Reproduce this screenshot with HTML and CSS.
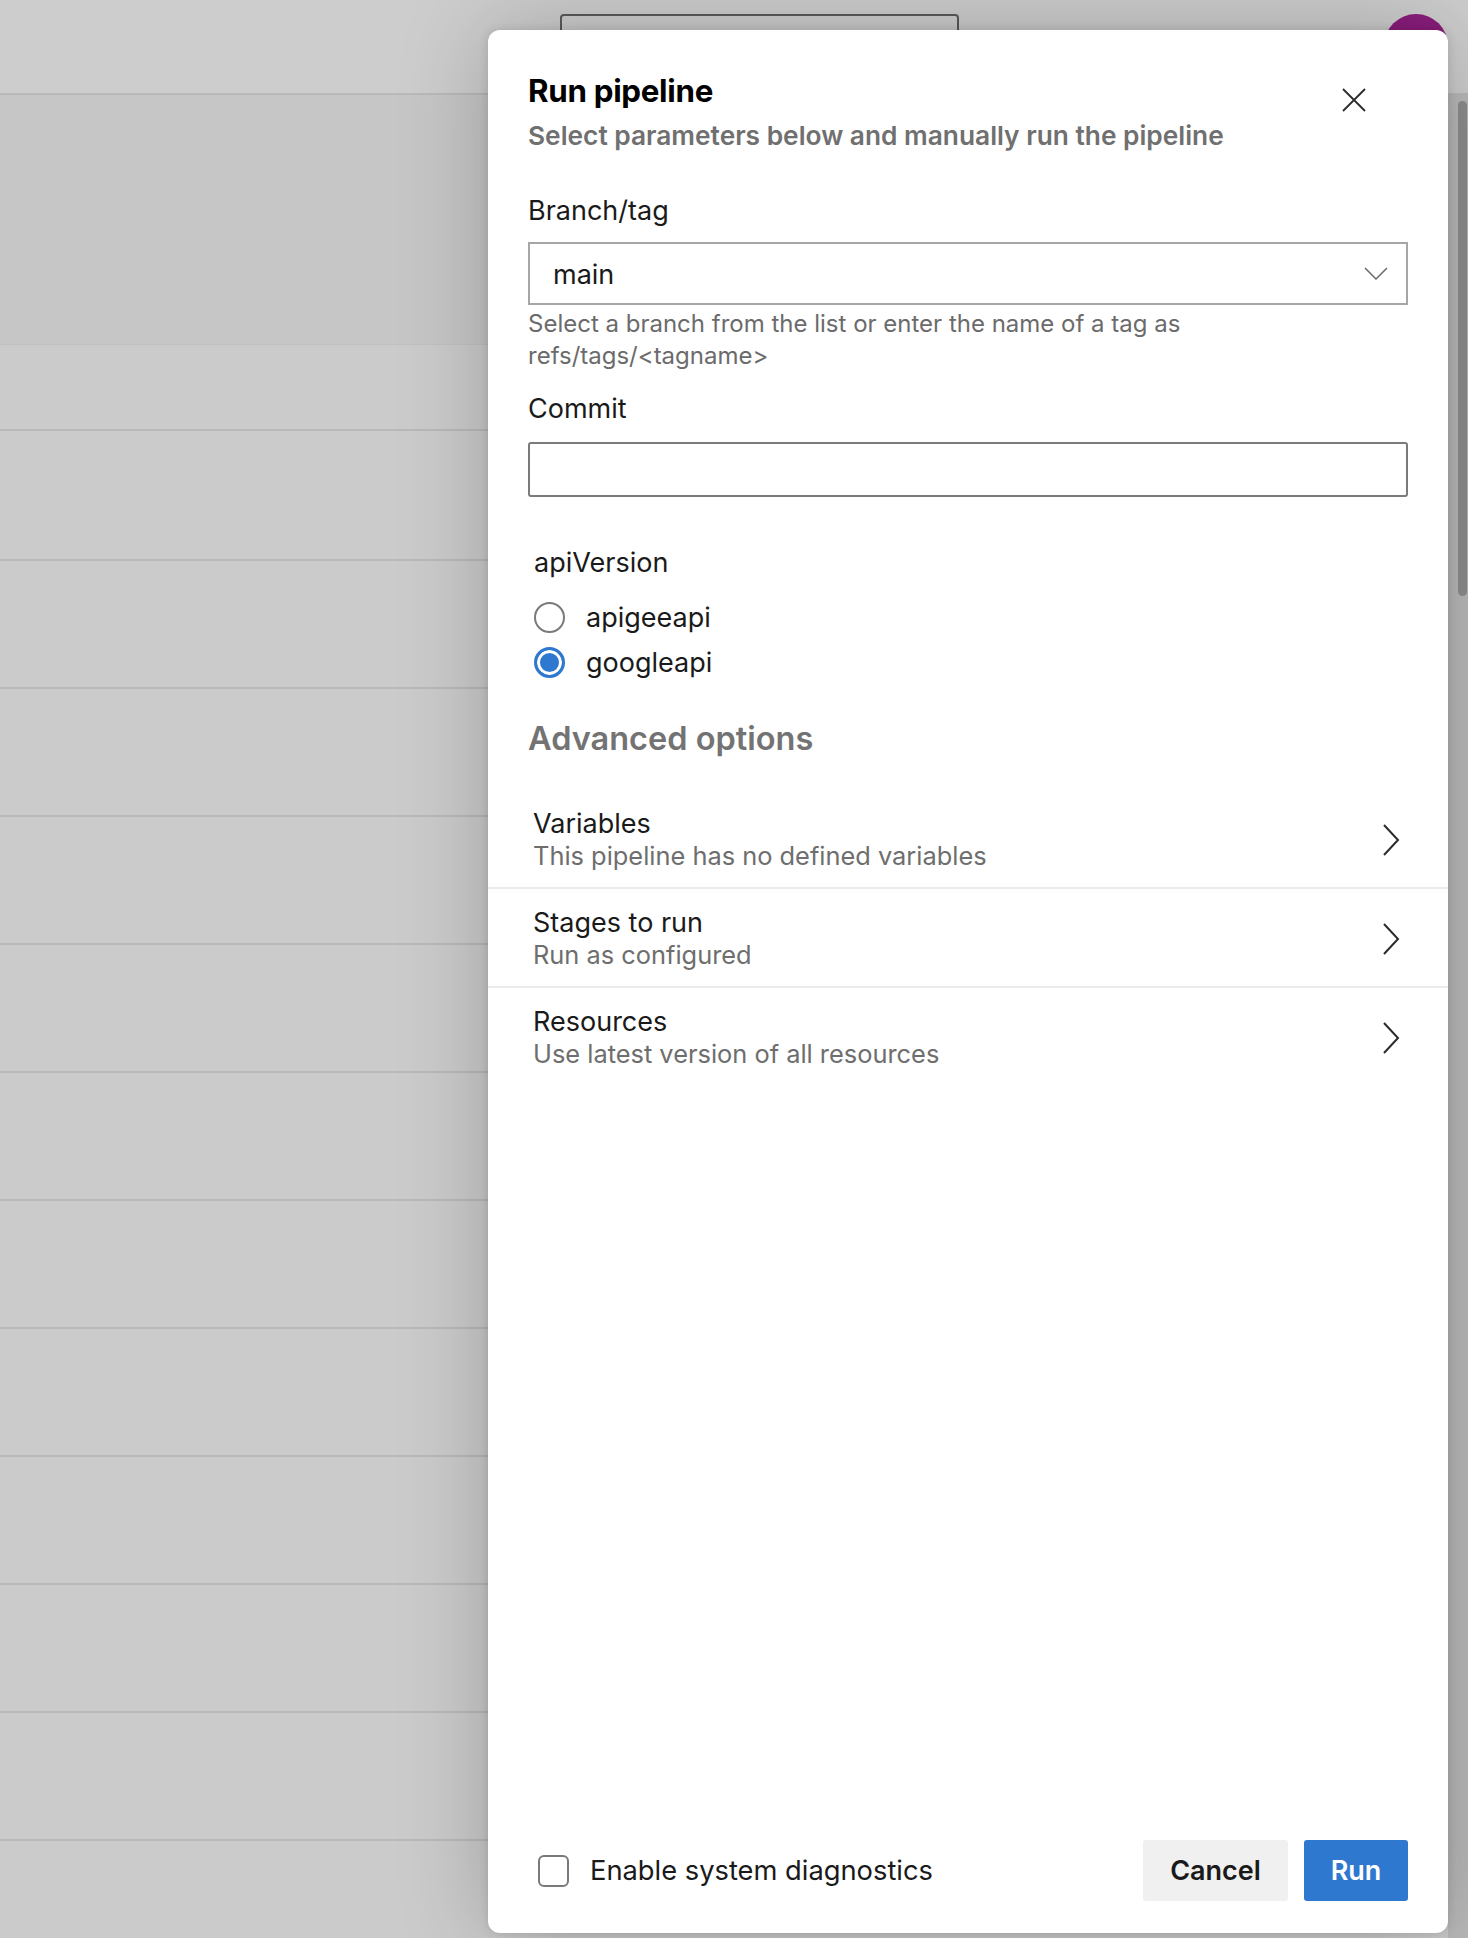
FILE: index.html
```html
<!DOCTYPE html>
<html lang="en">
<head>
<meta charset="utf-8">
<title>Run pipeline</title>
<link rel="stylesheet" href="styles.css">
</head>
<body>
<div class="page">
  <header class="topbar">
    <div class="search"></div>
    <div class="avatar"></div>
  </header>
  <div class="main">
    <div class="list">
      <div class="band"></div>
      <div class="row row-first"></div>
      <div class="row row-tall"></div>
      <div class="row"></div>
      <div class="row"></div>
      <div class="row"></div>
      <div class="row"></div>
      <div class="row"></div>
      <div class="row"></div>
      <div class="row"></div>
      <div class="row"></div>
      <div class="row"></div>
      <div class="row"></div>
    </div>
    <div class="scroll"><div class="thumb"></div></div>
  </div>
</div>

<div class="modal">
  <div class="modal-head">
    <div class="head-text">
      <h1 class="title">Run pipeline</h1>
      <p class="subtitle">Select parameters below and manually run the pipeline</p>
    </div>
    <button class="close" aria-label="Close">
      <svg width="24" height="24" viewBox="0 0 24 24"><path d="M1 1L23 23M23 1L1 23" stroke="#2b2b2b" stroke-width="1.8" fill="none"/></svg>
    </button>
  </div>

  <div class="modal-body">
    <div class="label label-branch">Branch/tag</div>
    <div class="dropdown">
      <span class="dropdown-value">main</span>
      <svg width="24" height="13" viewBox="0 0 24 13"><path d="M1 1L12 12L23 1" stroke="#6a6a6a" stroke-width="1.5" fill="none"/></svg>
    </div>
    <div class="helper">Select a branch from the list or enter the name of a tag as<br>refs/tags/&lt;tagname&gt;</div>

    <div class="label label-commit">Commit</div>
    <div class="textbox"></div>

    <div class="radio-group">
      <div class="label">apiVersion</div>
      <div class="radios">
        <div class="radio"><span class="radio-dot"></span><span class="radio-text">apigeeapi</span></div>
        <div class="radio"><span class="radio-dot checked"></span><span class="radio-text">googleapi</span></div>
      </div>
    </div>

    <h2 class="adv">Advanced options</h2>
  </div>

  <div class="options">
    <div class="option">
      <div class="option-text">
        <div class="option-title">Variables</div>
        <div class="option-sub">This pipeline has no defined variables</div>
      </div>
      <svg width="18" height="32" viewBox="0 0 18 32"><path d="M2 1L16 16L2 31" stroke="#2b2b2b" stroke-width="2" fill="none"/></svg>
    </div>
    <div class="option">
      <div class="option-text">
        <div class="option-title">Stages to run</div>
        <div class="option-sub">Run as configured</div>
      </div>
      <svg width="18" height="32" viewBox="0 0 18 32"><path d="M2 1L16 16L2 31" stroke="#2b2b2b" stroke-width="2" fill="none"/></svg>
    </div>
    <div class="option">
      <div class="option-text">
        <div class="option-title">Resources</div>
        <div class="option-sub">Use latest version of all resources</div>
      </div>
      <svg width="18" height="32" viewBox="0 0 18 32"><path d="M2 1L16 16L2 31" stroke="#2b2b2b" stroke-width="2" fill="none"/></svg>
    </div>
  </div>

  <div class="footer">
    <div class="check">
      <span class="checkbox"></span>
      <span class="check-text">Enable system diagnostics</span>
    </div>
    <div class="buttons">
      <button class="btn btn-cancel">Cancel</button>
      <button class="btn btn-run">Run</button>
    </div>
  </div>
</div>
</body>
</html>
```

FILE: styles.css
```css
* { box-sizing: border-box; }
html, body { margin: 0; padding: 0; }
body {
  width: 1468px;
  height: 1938px;
  overflow: hidden;
  background: #cbcbcb;
  font-family: Inter, "Noto Sans", "Liberation Sans", sans-serif;
  color: #1a1a1a;
  position: relative;
}

.page { width: 1468px; height: 1938px; display: flex; flex-direction: column; }

.topbar {
  height: 95px;
  flex: none;
  display: flex;
  align-items: flex-start;
  padding-top: 14px;
  background: #cdcdcd;
  border-bottom: 2px solid #b9b9b9;
}
.search {
  margin-left: 560px;
  width: 399px;
  height: 44px;
  border: 2px solid #5a5a5a;
  border-radius: 4px;
}
.avatar {
  margin-left: auto;
  margin-right: 20px;
  width: 64px;
  height: 64px;
  border-radius: 50%;
  background: #8a1d7c;
}

.main { flex: 1; display: flex; min-height: 0; }
.list { flex: 1; display: flex; flex-direction: column; }
.band { height: 250px; flex: none; background: #c6c6c6; border-bottom: 1px solid #c0c0c0; }
.row { height: 128px; flex: none; border-bottom: 2px solid #b9b9b9; }
.row-first { height: 86px; }
.row-tall { height: 130px; }

.scroll { width: 20px; flex: none; background: #b9b9b9; padding-top: 6px; }
.thumb { margin-left: 10px; width: 9px; height: 495px; border-radius: 5px; background: #8d8d8d; }

/* Modal */
.modal {
  position: absolute;
  left: 488px;
  top: 30px;
  width: 960px;
  height: 1903px;
  background: #ffffff;
  border-radius: 12px;
  display: flex;
  flex-direction: column;
  box-shadow: 0 0 90px rgba(0, 0, 0, 0.22), 0 0 10px rgba(0, 0, 0, 0.12);
}

.modal-head {
  display: flex;
  justify-content: space-between;
  align-items: flex-start;
  padding: 41px 82px 0 40px;
}
.title {
  margin: 0;
  font-size: 31.3px;
  line-height: 40px;
  font-weight: 700;
  letter-spacing: -0.3px;
  color: #000;
}
.subtitle {
  margin: 9px 0 0;
  font-size: 26.3px;
  line-height: 32px;
  font-weight: 600;
  letter-spacing: 0;
  color: #707070;
}
.close {
  margin-top: 17px;
  width: 24px;
  height: 24px;
  padding: 0;
  border: 0;
  background: none;
  display: block;
}
.close svg { display: block; }

.modal-body { padding: 0 40px; display: flex; flex-direction: column; }

.label {
  font-size: 27px;
  line-height: 34px;
  color: #1a1a1a;
}
.label-branch { margin-top: 42px; }
.dropdown {
  margin-top: 14px;
  height: 63px;
  border: 2px solid #a6a6a6;
  display: flex;
  align-items: center;
  justify-content: space-between;
  padding: 2px 18px 0 23px;
}
.dropdown-value { font-size: 27px; color: #1a1a1a; }
.dropdown svg { display: block; margin-top: -2px; }
.helper {
  margin-top: 3px;
  font-size: 24px;
  line-height: 32px;
  color: #6b6b6b;
}
.label-commit { margin-top: 20px; }
.textbox {
  margin-top: 16px;
  height: 55px;
  border: 2px solid #7b7b7b;
  border-radius: 3px;
}

.radio-group { margin-top: 49px; padding-left: 6px; }
.radios { margin-top: 15px; }
.radio { height: 45px; display: flex; align-items: center; }
.radio-dot {
  width: 31px;
  height: 31px;
  border-radius: 50%;
  border: 2px solid #7a7a7a;
  flex: none;
}
.radio-dot.checked {
  border: 3px solid #2f78cf;
  background: #2f78cf;
  box-shadow: inset 0 0 0 3px #ffffff;
}
.radio-text { margin-left: 21px; font-size: 27px; color: #1a1a1a; }

.adv {
  margin: 34px 0 0;
  font-size: 32.5px;
  line-height: 40px;
  font-weight: 600;
  color: #737373;
}

.options { margin-top: 31px; }
.option {
  display: flex;
  align-items: center;
  justify-content: space-between;
  padding: 17px 48px 15px 45px;
  border-bottom: 2px solid #ebebeb;
}
.option:last-child { border-bottom: 0; }
.option svg { display: block; }
.option-title { font-size: 27px; line-height: 33px; color: #1a1a1a; }
.option-sub { font-size: 25.4px; line-height: 32px; color: #6e6e6e; }

.footer {
  margin-top: auto;
  padding: 0 40px 32px;
  display: flex;
  align-items: center;
  justify-content: space-between;
}
.check { display: flex; align-items: center; padding-left: 10px; }
.checkbox {
  width: 31px;
  height: 32px;
  border: 2px solid #7a7a7a;
  border-radius: 6px;
}
.check-text { margin-left: 21px; font-size: 27.3px; color: #1a1a1a; }
.buttons { display: flex; gap: 16px; }
.btn {
  height: 61px;
  border: 0;
  border-radius: 3px;
  font-family: inherit;
  font-size: 27px;
  font-weight: 600;
  padding: 0;
}
.btn-cancel { width: 145px; background: #f0f0f0; color: #1a1a1a; }
.btn-run { width: 104px; background: #2f78cf; color: #ffffff; }
```
